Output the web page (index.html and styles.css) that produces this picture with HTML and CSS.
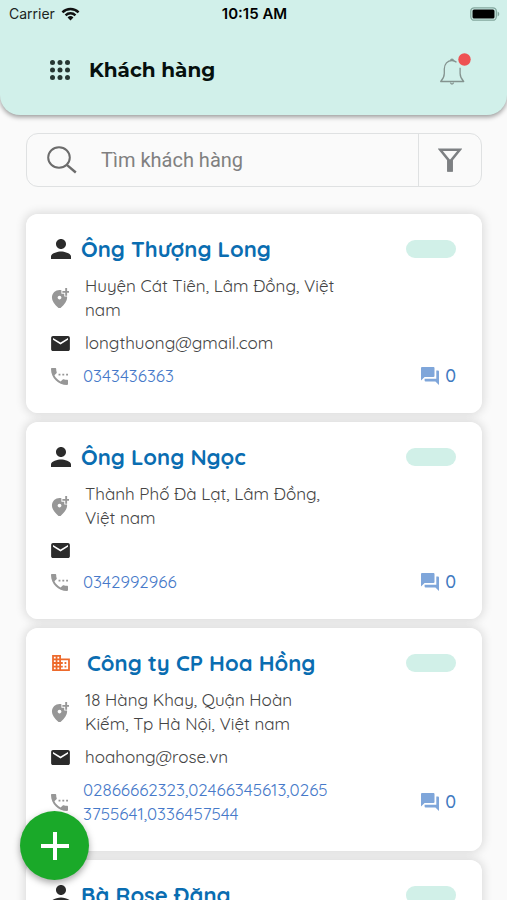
FILE: index.html
```html
<!DOCTYPE html>
<html lang="vi">
<head>
<meta charset="utf-8">
<meta name="viewport" content="width=device-width, initial-scale=1">
<title>Khách hàng</title>
<link rel="stylesheet" href="styles.css">
</head>
<body>
<svg class="sprite" aria-hidden="true">
  <symbol id="person" viewBox="4 4 16 16"><path d="M12 12c2.21 0 4-1.79 4-4s-1.790-4-4-4-4 1.790-4 4 1.790 4 4 4zm0 2c-2.670 0-8 1.340-8 4v2h16v-2c0-2.660-5.330-4-8-4z"/></symbol>
  <symbol id="building" viewBox="2 3 20 18"><path d="M12 7V3H2v18h20V7H12zM6 19H4v-2h2v2zm0-4H4v-2h2v2zm0-4H4V9h2v2zm0-4H4V5h2v2zm4 12H8v-2h2v2zm0-4H8v-2h2v2zm0-4H8V9h2v2zm0-4H8V5h2v2zm10 12h-8v-2h2v-2h-2v-2h2v-2h-2V9h8v10zm-2-8h-2v2h2v-2zm0 4h-2v2h2v-2z"/></symbol>
  <symbol id="pin" viewBox="3 1 19 21"><path d="M20 1v3h3v2h-3v3h-2V6h-3V4h3V1h2zm-8 12c1.100 0 2-.9 2-2s-.9-2-2-2-2 .9-2 2 .9 2 2 2zm2-9.750V7h3v3h2.920c.05.390.08.790.08 1.200 0 3.320-2.670 7.250-8 11.800-5.330-4.550-8-8.480-8-11.800C4 6.220 7.800 3 12 3c.68 0 1.350.08 2 .25z"/></symbol>
  <symbol id="mail" viewBox="2 4 20 16"><path d="M20 4H4c-1.100 0-2 .9-2 2v12c0 1.100.9 2 2 2h16c1.100 0 2-.9 2-2V6c0-1.100-.9-2-2-2zm0 4l-8 5-8-5V6l8 5 8-5v2z"/></symbol>
  <symbol id="phone" viewBox="3 3 18 18"><path d="M11 9h2v2h-2zM15 9h2v2h-2zM19 9h2v2h-2zM20 15.500c-1.250 0-2.450-.2-3.570-.57-.1-.03-.21-.05-.31-.05-.26 0-.51.1-.71.290l-2.200 2.200c-2.830-1.440-5.150-3.750-6.590-6.580l2.200-2.210c.28-.27.360-.66.250-1.010C8.700 6.450 8.500 5.250 8.500 4c0-.55-.45-1-1-1H4c-.55 0-1 .45-1 1 0 9.390 7.610 17 17 17 .55 0 1-.45 1-1v-3.500c0-.55-.45-1-1-1z"/></symbol>
  <symbol id="chat" viewBox="2 2 20 20"><path d="M21 6h-2v9H6v2c0 .55.450 1 1 1h11l4 4V7c0-.55-.45-1-1-1zm-4 6V3c0-.55-.45-1-1-1H3c-.55 0-1 .45-1 1v14l4-4h10c.55 0 1-.45 1-1z"/></symbol>
</svg>
<div class="app">
  <header class="header">
    <div class="status">
      <span class="carrier">Carrier
        <svg class="wifi" viewBox="0 0 20 14"><g fill="none" stroke="#111" stroke-width="2.600"><path d="M1.500 5.200a12.200 12.200 0 0 1 17 0"/><path d="M4.800 8.400a7.500 7.500 0 0 1 10.400 0"/></g><path d="M10 13.800L6.900 10.700a4.400 4.400 0 0 1 6.200 0z" fill="#111"/></svg>
      </span>
      <span class="time">10:15 AM</span>
      <svg class="battery" viewBox="0 0 30 14"><rect x=".8" y=".8" width="25.500" height="12.400" rx="3.500" fill="none" stroke="#82a69d" stroke-width="1.300"/><rect x="2.500" y="2.500" width="22" height="9" rx="1.500"/><path d="M27.600 4.500c2.200.8 2.200 4.200 0 5z" fill="#82a69d"/></svg>
    </div>
    <div class="bar">
      <button class="icon-button" aria-label="Menu"><svg class="grid-icon" viewBox="0 0 20 20" fill="#263632"><circle cx="2.500" cy="2.500" r="2.500"/><circle cx="10" cy="2.500" r="2.500"/><circle cx="17.500" cy="2.500" r="2.500"/><circle cx="2.500" cy="10" r="2.500"/><circle cx="10" cy="10" r="2.500"/><circle cx="17.500" cy="10" r="2.500"/><circle cx="2.500" cy="17.500" r="2.500"/><circle cx="10" cy="17.500" r="2.500"/><circle cx="17.500" cy="17.500" r="2.500"/></svg></button>
      <h1 class="title">Khách hàng</h1>
      <button class="icon-button" aria-label="Thông báo"><svg class="bell" viewBox="0 0 32 34"><g fill="none" stroke="#84938f" stroke-width="1.300" stroke-linejoin="round"><path d="M17.500 9.200C16 8 14.500 7.500 13 7.500 8.500 7.500 5.300 11 5.300 16v4.500c0 3-1.300 5.500-3.600 8h23c-2.300-2.500-3.600-5-3.600-8V14.800"/><path d="M11.700 7.300c0-1.700 2.600-1.700 2.600 0M11.500 29.500c.2 2 2.800 2 3 0"/></g><circle cx="25.500" cy="6.500" r="6.200" fill="#ee5253"/></svg></button>
    </div>
  </header>

  <form class="search">
    <label class="search-label" for="q" aria-label="Tìm khách hàng"><svg class="search-icon" viewBox="0 0 30 28" fill="none" stroke="#6c6c6c" stroke-width="2"><ellipse cx="12" cy="11.500" rx="10.800" ry="10.300"/><path d="M19.800 18.800l9 7.700" stroke-width="2.400"/></svg></label>
    <input class="search-input" id="q" type="text" placeholder="Tìm khách hàng">
    <button class="filter" type="button" aria-label="Lọc"><svg class="filter-icon" viewBox="0 0 24 24"><path d="M2.200 1.700h19.600L13.500 12v10.500h-3V12z" fill="none" stroke="#7d8083" stroke-width="2.600"/><path d="M9.200 11.500h5.600V23.500H9.200z" fill="#7d8083"/></svg></button>
  </form>

  <main class="list">
    <article class="card">
      <svg class="person"><use href="#person"/></svg>
      <h2 class="name">Ông Thượng Long</h2>
      <span class="tag"></span>
      <svg class="pin"><use href="#pin"/></svg>
      <p class="text">Huyện Cát Tiên, Lâm Đồng, Việt<br>nam</p>
      <svg class="mail"><use href="#mail"/></svg>
      <p class="text">longthuong@gmail.com</p>
      <svg class="phone"><use href="#phone"/></svg>
      <a class="tel" href="tel:0343436363">0343436363</a>
      <a class="chat" href="#"><svg class="chat-icon"><use href="#chat"/></svg>0</a>
    </article>
    <article class="card">
      <svg class="person"><use href="#person"/></svg>
      <h2 class="name">Ông Long Ngọc</h2>
      <span class="tag"></span>
      <svg class="pin"><use href="#pin"/></svg>
      <p class="text">Thành Phố Đà Lạt, Lâm Đồng,<br>Việt nam</p>
      <svg class="mail"><use href="#mail"/></svg>
      <p class="text empty"></p>
      <svg class="phone"><use href="#phone"/></svg>
      <a class="tel" href="tel:0342992966">0342992966</a>
      <a class="chat" href="#"><svg class="chat-icon"><use href="#chat"/></svg>0</a>
    </article>
    <article class="card">
      <svg class="building"><use href="#building"/></svg>
      <h2 class="name company">Công ty CP Hoa Hồng</h2>
      <span class="tag"></span>
      <svg class="pin"><use href="#pin"/></svg>
      <p class="text">18 Hàng Khay, Quận Hoàn<br>Kiếm, Tp Hà Nội, Việt nam</p>
      <svg class="mail"><use href="#mail"/></svg>
      <p class="text">hoahong@rose.vn</p>
      <svg class="phone"><use href="#phone"/></svg>
      <a class="tel" href="tel:02866662323">02866662323,02466345613,0265<br>3755641,0336457544</a>
      <a class="chat" href="#"><svg class="chat-icon"><use href="#chat"/></svg>0</a>
    </article>
    <article class="card">
      <svg class="person"><use href="#person"/></svg>
      <h2 class="name">Bà Rose Đăng</h2>
      <span class="tag"></span>
    </article>
  </main>
  <button class="add" aria-label="Thêm khách hàng"><svg class="plus" viewBox="0 0 30 30"><path d="M15 1v28M1 15h28" stroke="#fff" stroke-width="4"/></svg></button>
</div>
</body>
</html>
```
FILE: styles.css
```css
* { box-sizing: border-box; }
body { margin: 0; background: #fafafa; font-family: Quicksand, Lato, "Noto Sans", sans-serif; }
button { border: 0; padding: 0; background: none; }
h1, h2, p { margin: 0; }
a { text-decoration: none; }
svg { display: block; }
.sprite { position: absolute; width: 0; height: 0; }

.app { display: flex; flex-direction: column; height: 100vh; overflow: hidden; }

.header {
  flex: none;
  background: #d1f0ea;
  border-radius: 0 0 20px 20px;
  box-shadow: 0 2px 5px rgba(0, 0, 0, .4);
  padding-bottom: 20px;
}
.status {
  display: grid;
  grid-template-columns: 1fr auto 1fr;
  align-items: center;
  height: 27px;
  padding: 0 7px 0 9px;
  font-family: Inter, sans-serif;
  font-size: 14px;
  color: #1c2523;
}
.carrier { display: flex; align-items: center; gap: 6px; }
.wifi { width: 19px; height: 14px; }
.time { font-size: 15px; font-weight: 600; color: #000; }
.battery { width: 30px; height: 14px; justify-self: end; }
.bar { display: flex; align-items: center; height: 68px; padding: 18px 36px 0 50px; }
.grid-icon { width: 20px; height: 20px; }
.title { flex: 1; margin-left: 19px; font: 700 20px/24px Montserrat, Inter, sans-serif; color: #06100e; }
.bell { width: 32px; height: 34px; }

.search {
  flex: none;
  display: flex;
  height: 54px;
  margin: 18px 25px 0 26px;
  border: 1px solid #dfe1e2;
  border-radius: 12px;
}
.search-label { display: flex; align-items: center; padding-left: 20px; }
.search-icon { width: 30px; height: 28px; }
.search-input {
  flex: 1;
  min-width: 0;
  border: 0;
  padding: 0 0 0 24px;
  outline: 0;
  background: none;
  font: 20px Roboto, sans-serif;
}
.search-input::placeholder { color: #808080; }
.filter { display: grid; place-items: center; width: 63px; border-left: 1px solid #dfe1e2; }
.filter-icon { width: 24px; height: 24px; }

.list {
  flex: 1;
  min-height: 0;
  overflow: hidden auto;
  scrollbar-width: none;
  isolation: isolate;
  display: flex;
  flex-direction: column;
  gap: 9px;
  padding: 27px 25px 0 26px;
}
.card {
  position: relative;
  flex: none;
  display: grid;
  grid-template-columns: 20px 1fr auto;
  column-gap: 14px;
  row-gap: 9px;
  align-items: center;
  padding: 19px 26px 25px 25px;
  border-radius: 12px;
  background: #fff;
}
/* Shadow sits on its own layer so it never darkens the neighbouring card. */
.card::before {
  content: "";
  position: absolute;
  inset: 0;
  z-index: -1;
  border-radius: 12px;
  box-shadow: 0 0 10px 2px rgba(0, 0, 0, .12);
}
.card > svg { grid-column: 1; }
.person { width: 20px; height: 20px; fill: #2b2b2b; }
.building { width: 18px; height: 16px; margin-left: 1px; fill: #ed6a2c; }
.pin { width: 18px; height: 20px; fill: #979797; }
.mail { width: 19px; height: 15px; fill: #2b2b2b; }
.phone { width: 17px; height: 17px; fill: #979797; }
.name { margin-left: -4px; font-size: 22px; line-height: 32px; font-weight: 700; color: #0a6db1; }
.company { margin-left: 2px; }
.tag { width: 50px; height: 18px; border-radius: 9px; background: #d1f0e8; }
.text { font-size: 17px; line-height: 24px; color: #444; }
.empty { min-height: 22px; }
.tel { margin-left: -2px; font-size: 17px; line-height: 24px; color: #4679c9; }
.chat { justify-self: end; display: flex; align-items: center; gap: 6px; font-size: 18px; line-height: 20px; font-weight: 500; color: #3f79bf; }
.chat-icon { width: 18px; height: 18px; fill: #7fa6da; }

.add {
  position: fixed;
  left: 20px;
  bottom: 20px;
  display: grid;
  place-items: center;
  width: 69px;
  height: 69px;
  border-radius: 50%;
  background: #1aa929;
  box-shadow: 0 3px 7px rgba(0, 0, 0, .35);
}
.plus { width: 30px; height: 30px; }
```
